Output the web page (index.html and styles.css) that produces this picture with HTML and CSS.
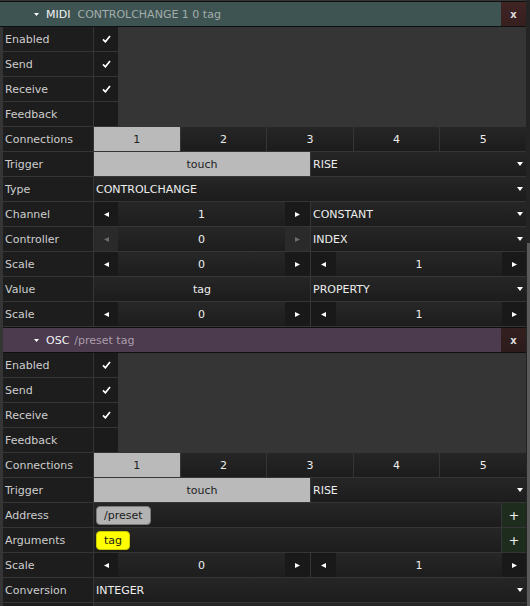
FILE: index.html
```html
<!DOCTYPE html>
<html>
<head>
<meta charset="utf-8">
<link rel="stylesheet" href="styles.css">
</head>
<body>
<div class="app">
  <div class="main">
    <section class="block first">
      <div class="header midi">
        <div class="title">
          <svg class="caret" width="5" height="3" viewBox="0 0 5 3"><polygon points="0,0 5,0 2.5,3" fill="#fff"/></svg>
          <span class="name">MIDI</span><span class="sub">CONTROLCHANGE 1 0 tag</span>
        </div>
        <div class="close">x</div>
      </div>
      <div class="rows">
        <div class="row"><div class="label">Enabled</div><div class="check"><svg width="9" height="8" viewBox="0 0 9 8"><polyline points="1,4.3 3.4,6.8 8,1" fill="none" stroke="#fff" stroke-width="1.7"/></svg></div></div>
        <div class="row"><div class="label">Send</div><div class="check"><svg width="9" height="8" viewBox="0 0 9 8"><polyline points="1,4.3 3.4,6.8 8,1" fill="none" stroke="#fff" stroke-width="1.7"/></svg></div></div>
        <div class="row"><div class="label">Receive</div><div class="check"><svg width="9" height="8" viewBox="0 0 9 8"><polyline points="1,4.3 3.4,6.8 8,1" fill="none" stroke="#fff" stroke-width="1.7"/></svg></div></div>
        <div class="row"><div class="label">Feedback</div><div class="check"></div></div>
        <div class="row"><div class="label">Connections</div>
          <div class="value tabs"><div class="tab sel">1</div><div class="tab">2</div><div class="tab">3</div><div class="tab">4</div><div class="tab">5</div></div>
        </div>
        <div class="row"><div class="label">Trigger</div>
          <div class="value"><div class="left btn-light">touch</div>
            <div class="right dd"><span>RISE</span><svg class="dn" width="6" height="4" viewBox="0 0 6 4"><polygon points="0,0 6,0 3,4" fill="#fff"/></svg></div></div>
        </div>
        <div class="row"><div class="label">Type</div>
          <div class="value dd"><span>CONTROLCHANGE</span><svg class="dn" width="6" height="4" viewBox="0 0 6 4"><polygon points="0,0 6,0 3,4" fill="#fff"/></svg></div>
        </div>
        <div class="row"><div class="label">Channel</div>
          <div class="value">
            <div class="left spin"><div class="arr a24"><svg width="5" height="5" viewBox="0 0 5 5"><polygon points="5,0 5,5 0,2.5" fill="#fff"/></svg></div><div class="num">1</div><div class="arr a25"><svg width="5" height="5" viewBox="0 0 5 5"><polygon points="0,0 5,2.5 0,5" fill="#fff"/></svg></div></div>
            <div class="right dd"><span>CONSTANT</span><svg class="dn" width="6" height="4" viewBox="0 0 6 4"><polygon points="0,0 6,0 3,4" fill="#fff"/></svg></div>
          </div>
        </div>
        <div class="row"><div class="label">Controller</div>
          <div class="value">
            <div class="left spin"><div class="arr a24 off"><svg width="5" height="5" viewBox="0 0 5 5"><polygon points="5,0 5,5 0,2.5" fill="#6c6c6c"/></svg></div><div class="num">0</div><div class="arr a25 off"><svg width="5" height="5" viewBox="0 0 5 5"><polygon points="0,0 5,2.5 0,5" fill="#6c6c6c"/></svg></div></div>
            <div class="right dd"><span>INDEX</span><svg class="dn" width="6" height="4" viewBox="0 0 6 4"><polygon points="0,0 6,0 3,4" fill="#fff"/></svg></div>
          </div>
        </div>
        <div class="row"><div class="label">Scale</div>
          <div class="value">
            <div class="left spin"><div class="arr a24"><svg width="5" height="5" viewBox="0 0 5 5"><polygon points="5,0 5,5 0,2.5" fill="#fff"/></svg></div><div class="num">0</div><div class="arr a25"><svg width="5" height="5" viewBox="0 0 5 5"><polygon points="0,0 5,2.5 0,5" fill="#fff"/></svg></div></div>
            <div class="right spin"><div class="arr a25"><svg width="5" height="5" viewBox="0 0 5 5"><polygon points="5,0 5,5 0,2.5" fill="#fff"/></svg></div><div class="num">1</div><div class="arr a24"><svg width="5" height="5" viewBox="0 0 5 5"><polygon points="0,0 5,2.5 0,5" fill="#fff"/></svg></div></div>
          </div>
        </div>
        <div class="row"><div class="label">Value</div>
          <div class="value">
            <div class="left plain">tag</div>
            <div class="right dd"><span>PROPERTY</span><svg class="dn" width="6" height="4" viewBox="0 0 6 4"><polygon points="0,0 6,0 3,4" fill="#fff"/></svg></div>
          </div>
        </div>
        <div class="row"><div class="label">Scale</div>
          <div class="value">
            <div class="left spin"><div class="arr a24"><svg width="5" height="5" viewBox="0 0 5 5"><polygon points="5,0 5,5 0,2.5" fill="#fff"/></svg></div><div class="num">0</div><div class="arr a25"><svg width="5" height="5" viewBox="0 0 5 5"><polygon points="0,0 5,2.5 0,5" fill="#fff"/></svg></div></div>
            <div class="right spin"><div class="arr a25"><svg width="5" height="5" viewBox="0 0 5 5"><polygon points="5,0 5,5 0,2.5" fill="#fff"/></svg></div><div class="num">1</div><div class="arr a24"><svg width="5" height="5" viewBox="0 0 5 5"><polygon points="0,0 5,2.5 0,5" fill="#fff"/></svg></div></div>
          </div>
        </div>
      </div>
    </section>

    <section class="block">
      <div class="header osc">
        <div class="title">
          <svg class="caret" width="5" height="3" viewBox="0 0 5 3"><polygon points="0,0 5,0 2.5,3" fill="#fff"/></svg>
          <span class="name">OSC</span><span class="sub">/preset tag</span>
        </div>
        <div class="close">x</div>
      </div>
      <div class="rows">
        <div class="row"><div class="label">Enabled</div><div class="check"><svg width="9" height="8" viewBox="0 0 9 8"><polyline points="1,4.3 3.4,6.8 8,1" fill="none" stroke="#fff" stroke-width="1.7"/></svg></div></div>
        <div class="row"><div class="label">Send</div><div class="check"><svg width="9" height="8" viewBox="0 0 9 8"><polyline points="1,4.3 3.4,6.8 8,1" fill="none" stroke="#fff" stroke-width="1.7"/></svg></div></div>
        <div class="row"><div class="label">Receive</div><div class="check"><svg width="9" height="8" viewBox="0 0 9 8"><polyline points="1,4.3 3.4,6.8 8,1" fill="none" stroke="#fff" stroke-width="1.7"/></svg></div></div>
        <div class="row"><div class="label">Feedback</div><div class="check"></div></div>
        <div class="row"><div class="label">Connections</div>
          <div class="value tabs"><div class="tab sel">1</div><div class="tab">2</div><div class="tab">3</div><div class="tab">4</div><div class="tab">5</div></div>
        </div>
        <div class="row"><div class="label">Trigger</div>
          <div class="value"><div class="left btn-light">touch</div>
            <div class="right dd"><span>RISE</span><svg class="dn" width="6" height="4" viewBox="0 0 6 4"><polygon points="0,0 6,0 3,4" fill="#fff"/></svg></div></div>
        </div>
        <div class="row"><div class="label">Address</div>
          <div class="value">
            <div class="list"><span class="pill grey">/preset</span></div>
            <div class="plus">+</div>
          </div>
        </div>
        <div class="row"><div class="label">Arguments</div>
          <div class="value">
            <div class="list"><span class="pill yellow">tag</span></div>
            <div class="plus">+</div>
          </div>
        </div>
        <div class="row"><div class="label">Scale</div>
          <div class="value">
            <div class="left spin"><div class="arr a24"><svg width="5" height="5" viewBox="0 0 5 5"><polygon points="5,0 5,5 0,2.5" fill="#fff"/></svg></div><div class="num">0</div><div class="arr a25"><svg width="5" height="5" viewBox="0 0 5 5"><polygon points="0,0 5,2.5 0,5" fill="#fff"/></svg></div></div>
            <div class="right spin"><div class="arr a25"><svg width="5" height="5" viewBox="0 0 5 5"><polygon points="5,0 5,5 0,2.5" fill="#fff"/></svg></div><div class="num">1</div><div class="arr a24"><svg width="5" height="5" viewBox="0 0 5 5"><polygon points="0,0 5,2.5 0,5" fill="#fff"/></svg></div></div>
          </div>
        </div>
        <div class="row"><div class="label">Conversion</div>
          <div class="value dd"><span>INTEGER</span><svg class="dn" width="6" height="4" viewBox="0 0 6 4"><polygon points="0,0 6,0 3,4" fill="#fff"/></svg></div>
        </div>
        <div class="row"><div class="label"></div><div class="value dd"></div></div>
      </div>
    </section>
  </div>
  <div class="scrollbar"><div class="track"></div><div class="thumb"></div></div>
</div>
</body>
</html>
```

FILE: styles.css
```css
html, body {
  margin: 0;
  padding: 0;
  background: #353535;
  overflow: hidden;
}
body {
  font-family: "DejaVu Sans", sans-serif;
  font-size: 11px;
  color: #ededed;
}
.app {
  display: flex;
  height: 606px;
  overflow: hidden;
}
.main {
  width: 526px;
  display: flex;
  flex-direction: column;
}
.scrollbar {
  width: 4px;
  background: #242424;
  display: flex;
  flex-direction: column;
}
.scrollbar .track { height: 243px; flex: none; }
.scrollbar .thumb { flex: 1; margin-left: 1px; background: #5a5a5a; }

.block.first { padding-top: 1px; }

.header {
  height: 24px;
  border-top: 1px solid #0f0f0f;
  border-bottom: 1px solid #0f0f0f;
  display: flex;
  align-items: stretch;
}
.header.midi { background: #3e5452; }
.header.osc { background: #4c3a4e; margin-left: 3px; }
.header .title {
  flex: 1;
  display: flex;
  align-items: center;
  padding-left: 34px;
}
.header.osc .title { padding-left: 31px; }
.header .caret { margin-right: 7px; }
.header .name { color: #f2f2f2; margin-right: 7px; }
.header.midi .sub { color: #a3adab; }
.header.osc .sub { color: #ab9dab; margin-left: -2px; }
.header .close {
  width: 25px;
  display: flex;
  align-items: center;
  justify-content: center;
  color: #dcdcdc;
  font-size: 10px;
  font-weight: bold;
}
.header.midi .close { background: linear-gradient(#402424, #361f1f); }
.header.osc .close { background: linear-gradient(#341f1f, #2c1b1b); }

.row {
  height: 24px;
  margin-bottom: 1px;
  padding-left: 3px;
  display: flex;
  gap: 1px;
}
.label {
  width: 88px;
  padding-left: 2px;
  background: #1d1d1d;
  color: #cdcdcd;
  display: flex;
  align-items: center;
}
.check {
  width: 24px;
  background: #1b1b1b;
  display: flex;
  align-items: center;
  justify-content: center;
}
.value {
  flex: 1;
  display: flex;
  gap: 1px;
}
.value.dd, .dd {
  background: linear-gradient(#262626, #1c1c1c);
  display: flex;
  align-items: center;
  padding-left: 2px;
  padding-right: 3px;
}
.dd .dn { margin-left: auto; }
.left { width: 216px; flex: none; }
.right { flex: 1; }
.tabs .tab {
  flex: 1;
  background: linear-gradient(#262626, #1c1c1c);
  display: flex;
  align-items: center;
  justify-content: center;
}
.tabs .tab.sel { background: #bababa; color: #1e1e1e; }
.btn-light {
  background: #bababa;
  color: #1e1e1e;
  display: flex;
  align-items: center;
  justify-content: center;
}
.plain {
  background: linear-gradient(#262626, #1c1c1c);
  display: flex;
  align-items: center;
  justify-content: center;
}
.spin {
  display: flex;
  background: linear-gradient(#272727, #1d1d1d);
}
.spin .arr {
  display: flex;
  align-items: center;
  justify-content: center;
  background: #191919;
  flex: none;
}
.spin .arr.off { background: #2a2a2a; }
.spin .a24 { width: 24px; }
.spin .a25 { width: 25px; }
.spin .num {
  flex: 1;
  display: flex;
  align-items: center;
  justify-content: center;
}
.list {
  flex: 1;
  background: linear-gradient(#262626, #1c1c1c);
  display: flex;
  align-items: center;
  padding-left: 2px;
}
.pill {
  height: 17px;
  padding: 0 7px;
  border-radius: 4px;
  display: flex;
  align-items: center;
  color: #1a1a1a;
}
.pill.grey { background: #b3b3b3; border: 1px solid #7c7c7c; }
.pill.yellow { background: #ffff00; border: 1px solid #c9c900; }
.plus {
  width: 24px;
  flex: none;
  background: #1e2c1e;
  color: #f0f0f0;
  display: flex;
  align-items: center;
  justify-content: center;
  font-size: 13px;
}
```
